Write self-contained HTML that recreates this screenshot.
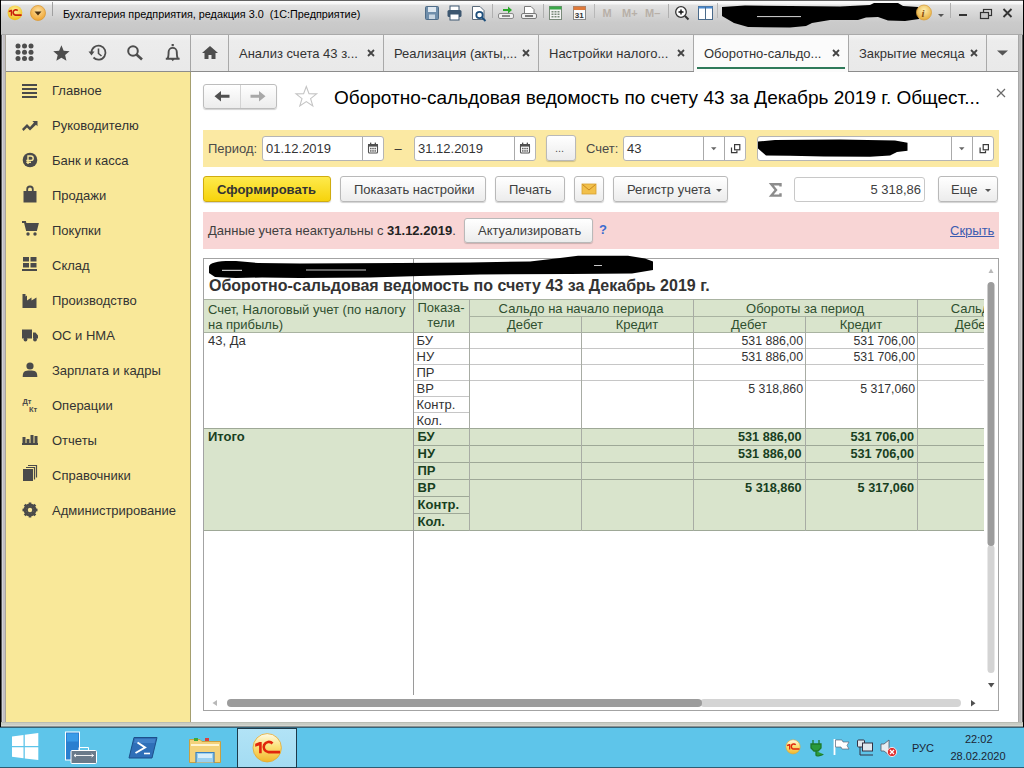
<!DOCTYPE html>
<html><head><meta charset="utf-8">
<style>
*{box-sizing:border-box;margin:0;padding:0}
html,body{width:1024px;height:768px;overflow:hidden;background:#000;font-family:"Liberation Sans",sans-serif;color:#333}
.a{position:absolute}
.t{position:absolute;white-space:nowrap;line-height:1}
svg{position:absolute;overflow:visible}
#frame{left:1px;top:0;width:1022px;height:728px;background:#c9c9c9}
#titlebar{left:1px;top:0;width:1022px;height:35px;background:linear-gradient(#5a5a5a 0,#6a6a6a 1px,#fbfbfb 1px,#f6f6f6 4px,#e2e2e2 5px,#cbcbcb 22px,#c6c6c6 34px,#aaaaaa 34px)}
#tabbar{left:6px;top:35px;width:1012px;height:37px;background:linear-gradient(#f4f4f4,#ececec 6px,#e9e9e9);border-bottom:1px solid #8c8c8c}
#sidebar{left:6px;top:72px;width:185px;height:651px;background:#f9e899;border-right:1px solid #a59f6f}
#main{left:191px;top:72px;width:827px;height:651px;background:#fff}
#taskbar{left:0;top:727px;width:1024px;height:41px;background:#5ec5ea;border-top:1px solid #35657a;border-bottom:1px solid #2c5d73}
.nav{font-size:13px;color:#333}
.tab{position:absolute;top:35px;height:36px;border-right:1px solid #a9a9a9}
.tabt{position:absolute;top:47px;font-size:13px;color:#333;white-space:nowrap;line-height:1}
.btn{position:absolute;border:1px solid #b9b9b9;border-radius:3px;background:linear-gradient(#fff,#ececec);box-shadow:0 1px 1px rgba(0,0,0,.18);font-size:13px;color:#404040;text-align:center;white-space:nowrap}
.inp{position:absolute;border:1px solid #b5b5b5;border-radius:3px;background:#fff;font-size:13px;color:#333}
.ic{fill:#4d4d4d}
</style></head><body>
<div class="a" id="frame"></div>
<div class="a" id="titlebar"></div>
<div class="a" id="tabbar"></div>
<div class="a" id="sidebar"></div>
<div class="a" id="main"></div>
<div class="a" id="taskbar"></div>
<div class="a" style="left:1px;top:35px;width:5px;height:692px;background:linear-gradient(90deg,#5a5a5a 0,#5a5a5a 1px,#d2d2d8 1px,#d2d2d8 2px,#c2bec2 2px,#c2bec2 4px,#aaa69a 4px)"></div>
<div class="a" style="left:1018px;top:35px;width:5px;height:692px;background:linear-gradient(90deg,#a8a8a8 0,#a8a8a8 1px,#bcbcbc 1px,#bcbcbc 3px,#cdcdcd 3px,#cdcdcd 4px,#5a5a5a 4px)"></div>
<div class="a" style="left:1px;top:722px;width:1022px;height:5px;background:linear-gradient(#b8bcb4 0,#b8bcb4 1px,#c8ccc4 1px,#c8ccc4 3px,#d4d6d0 3px,#d4d6d0 4px,#8a9090 4px)"></div>

<!-- ===== TITLE BAR ===== -->
<svg style="left:0;top:0" width="1024" height="35">
  <!-- 1C logo -->
  <g transform="translate(7.4 5.4) scale(0.52)">
    <circle cx="14.5" cy="14.3" r="14.2" fill="url(#g1c)"/>
    <path d="M2.5 10.2 L6.8 8.6 H9 V19.8 H6.4 V12 L2.5 13.2Z" fill="#c8200c"/>
    <path d="M19.8 10 A5.1 5.1 0 1 0 15.8 18.6 H27.3" fill="none" stroke="#c8200c" stroke-width="3.2"/>
  </g>
  <defs>
    <radialGradient id="g1c" cx="0.5" cy="0.35" r="0.6"><stop offset="0" stop-color="#fff3a0"/><stop offset="1" stop-color="#f0c020"/></radialGradient>
    <radialGradient id="gor" cx="0.5" cy="0.35" r="0.6"><stop offset="0" stop-color="#fde0a0"/><stop offset="1" stop-color="#f0a838"/></radialGradient>
    <radialGradient id="ginf" cx="0.5" cy="0.35" r="0.6"><stop offset="0" stop-color="#fff0b0"/><stop offset="1" stop-color="#e8b040"/></radialGradient>
  </defs>
  <!-- dropdown circle -->
  <circle cx="38" cy="13" r="7.5" fill="url(#gor)" stroke="#d99a3a" stroke-width="0.8"/>
  <path d="M34.5 11.5 L41.5 11.5 L38 15.5 Z" fill="#4a3010"/>
  <line x1="52.5" y1="2" x2="52.5" y2="16" stroke="#a0a0a0"/>
  <!-- toolbar icons -->
  <!-- save -->
  <rect x="425.5" y="6.5" width="13" height="13" rx="1" fill="#6f8eab" stroke="#4f6c88"/>
  <rect x="428" y="7" width="8" height="5" fill="#dfe8f0"/>
  <rect x="429" y="14.5" width="6" height="4.5" fill="#c9d6e2"/>
  <!-- print -->
  <rect x="450" y="6" width="9" height="5" fill="#fff" stroke="#3d5770"/>
  <rect x="447.5" y="10" width="14" height="7" rx="1.5" fill="#3d5770"/>
  <rect x="450" y="14" width="9" height="6" fill="#fff" stroke="#3d5770"/>
  <!-- preview -->
  <path d="M472.5 6.5 H480 L484 10.5 V19.5 H472.5 Z" fill="#fff" stroke="#5a6a7a"/>
  <circle cx="479.5" cy="15" r="3.2" fill="none" stroke="#1d4f7c" stroke-width="1.8"/>
  <line x1="482" y1="17.5" x2="485.5" y2="21" stroke="#1d4f7c" stroke-width="2"/>
  <line x1="492.5" y1="4" x2="492.5" y2="18" stroke="#b0b0b0"/>
  <!-- export -->
  <path d="M503 9 H508 V6.5 L512 10 L508 13.5 V11 H503Z" fill="#2aa82a"/>
  <rect x="498.5" y="13.5" width="15" height="5" rx="1.5" fill="#f0f0f0" stroke="#8a8a8a"/>
  <rect x="502" y="15" width="8" height="2" fill="#8a8a8a"/>
  <!-- tray -->
  <path d="M524.5 6.5 H531 L534 9.5 V14 H524.5Z" fill="#fff" stroke="#7a7a7a"/>
  <rect x="521.5" y="13.5" width="15" height="5" rx="1.5" fill="#f0f0f0" stroke="#7a7a7a"/>
  <rect x="525" y="15" width="8" height="2" fill="#7a7a7a"/>
  <line x1="543.5" y1="4" x2="543.5" y2="18" stroke="#b0b0b0"/>
  <!-- calendar green -->
  <rect x="549.5" y="6.5" width="12" height="13" fill="#f4f4f4" stroke="#7a8a7a"/>
  <rect x="549.5" y="6.5" width="12" height="3" fill="#3aa848"/>
  <g fill="#7a8a7a"><rect x="551.5" y="11" width="2" height="1.5"/><rect x="554.5" y="11" width="2" height="1.5"/><rect x="557.5" y="11" width="2" height="1.5"/><rect x="551.5" y="13.5" width="2" height="1.5"/><rect x="554.5" y="13.5" width="2" height="1.5"/><rect x="557.5" y="13.5" width="2" height="1.5"/><rect x="551.5" y="16" width="2" height="1.5"/><rect x="554.5" y="16" width="2" height="1.5"/><rect x="557.5" y="16" width="2" height="1.5"/></g>
  <!-- calendar 31 -->
  <rect x="573.5" y="6.5" width="12" height="13" fill="#fafafa" stroke="#8a8a8a"/>
  <rect x="573.5" y="6.5" width="12" height="3.5" fill="#e07a3a"/>
  <text x="574.8" y="18.3" font-family="Liberation Sans" font-weight="700" font-size="8" fill="#333">31</text>
  <line x1="594.5" y1="4" x2="594.5" y2="18" stroke="#b8b8b8"/>
  <!-- M M+ M- -->
  <text x="602.5" y="17" font-family="Liberation Sans" font-weight="700" font-size="11" fill="#b8b0a8">M</text>
  <text x="622" y="17" font-family="Liberation Sans" font-weight="700" font-size="11" fill="#b8b0a8">M+</text>
  <text x="645" y="17" font-family="Liberation Sans" font-weight="700" font-size="11" fill="#b8b0a8">M–</text>
  <line x1="668.5" y1="4" x2="668.5" y2="18" stroke="#b0b0b0"/>
  <!-- zoom -->
  <circle cx="681" cy="12" r="5.3" fill="#fff" stroke="#333" stroke-width="1.3"/>
  <path d="M678.5 12 H683.5 M681 9.5 V14.5" stroke="#111" stroke-width="1.4"/>
  <line x1="685" y1="16" x2="688.5" y2="19.5" stroke="#333" stroke-width="2"/>
  <!-- panels -->
  <rect x="698.5" y="6.5" width="14" height="13" fill="#fff" stroke="#4a6a8a"/>
  <rect x="698.5" y="6.5" width="14" height="2" fill="#4a8ad0"/>
  <line x1="705.5" y1="7" x2="705.5" y2="19" stroke="#4a6a8a"/>
  <line x1="717.5" y1="3" x2="717.5" y2="18" stroke="#b8b8b8"/>
  <!-- black scribble -->
  <path d="M722 7 L745 5.5 L790 6 L840 6.5 L870 5 L874 3 L898 3 L903 6 L918 7 L919 19 L905 21 L888 20.5 L878 17 L866 17.5 L858 20 L830 20 L812 23 L806 26 L790 27.5 L748 27 L734 23 L722 16 Z" fill="#000"/>
  <path d="M757 16.6 L801 16.6" stroke="#d8d8d8" stroke-width="1"/>
  <!-- info -->
  <circle cx="924" cy="12.5" r="7.5" fill="url(#ginf)" stroke="#d8a040" stroke-width="0.8"/>
  <text x="921.5" y="17" font-family="Liberation Serif" font-weight="700" font-style="italic" font-size="11" fill="#8a5010">i</text>
  <path d="M938 14 H944 L941 17Z" fill="#555"/>
  <line x1="950.5" y1="3" x2="950.5" y2="18" stroke="#b0b0b0"/>
  <!-- window controls -->
  <rect x="959" y="14" width="8" height="2" fill="#333"/>
  <rect x="983.5" y="9.5" width="8" height="6" fill="none" stroke="#333" stroke-width="1.2"/>
  <rect x="980.5" y="12.5" width="8" height="6" fill="#c8c8c8" stroke="#333" stroke-width="1.2"/>
  <path d="M1003.5 9 L1011.5 17 M1011.5 9 L1003.5 17" stroke="#333" stroke-width="1.8"/>
</svg>
<div class="t" style="left:63px;top:8.5px;font-size:10.8px;color:#000">Бухгалтерия предприятия, редакция 3.0&nbsp; (1С:Предприятие)</div>
<!-- ===== TAB BAR ===== -->
<svg style="left:0;top:35px" width="1024" height="37">
  <g class="ic">
    <!-- grid dots -->
    <circle cx="18" cy="11" r="2.5"/><circle cx="24.5" cy="11" r="2.5"/><circle cx="31" cy="11" r="2.5"/>
    <circle cx="18" cy="17.3" r="2.5"/><circle cx="24.5" cy="17.3" r="2.5"/><circle cx="31" cy="17.3" r="2.5"/>
    <circle cx="18" cy="23.6" r="2.5"/><circle cx="24.5" cy="23.6" r="2.5"/><circle cx="31" cy="23.6" r="2.5"/>
    <!-- star -->
    <path d="M61.40 10.20 L63.69 15.64 L69.58 16.14 L65.11 20.01 L66.45 25.76 L61.40 22.70 L56.35 25.76 L57.69 20.01 L53.22 16.14 L59.11 15.64Z"/>
  </g>
  <!-- history -->
  <path d="M91.5 17.5 A7 7 0 1 1 93.5 22.5" fill="none" stroke="#4d4d4d" stroke-width="1.8"/>
  <path d="M88.5 16.5 L94.5 16.5 L91.5 20.5Z" fill="#4d4d4d"/>
  <path d="M98.5 13.5 V18.5 L101.5 21" fill="none" stroke="#4d4d4d" stroke-width="1.6"/>
  <!-- search -->
  <circle cx="133" cy="16" r="4.8" fill="none" stroke="#4d4d4d" stroke-width="2"/>
  <line x1="136.5" y1="19.5" x2="142" y2="24.5" stroke="#4d4d4d" stroke-width="2.6"/>
  <!-- bell -->
  <path d="M165.8 23.8 H179.6 M167.5 23.5 C168.6 22 168.6 20.5 168.6 17 A4.1 4.1 0 0 1 176.8 17 C176.8 20.5 176.8 22 177.9 23.5" fill="none" stroke="#4d4d4d" stroke-width="1.9"/>
  <rect x="171.6" y="9" width="2.2" height="2.2" fill="#4d4d4d"/>
  <path d="M171 24 H174.5 L172.75 26.2Z" fill="#4d4d4d"/>
  <line x1="190.5" y1="0" x2="190.5" y2="36" stroke="#a5a5a5"/>
  <!-- home -->
  <path d="M210 11 L218 18 H215.5 V24 H211.5 V20 H208.5 V24 H204.5 V18 H202 Z" fill="#4d4d4d"/>
  <line x1="228.5" y1="0" x2="228.5" y2="36" stroke="#a9a9a9"/>
  <line x1="383.5" y1="0" x2="383.5" y2="36" stroke="#a9a9a9"/>
  <line x1="538.5" y1="0" x2="538.5" y2="36" stroke="#a9a9a9"/>
  <line x1="693.5" y1="0" x2="693.5" y2="36" stroke="#a9a9a9"/>
  <line x1="848.5" y1="0" x2="848.5" y2="36" stroke="#a9a9a9"/>
  <line x1="986.5" y1="0" x2="986.5" y2="36" stroke="#a9a9a9"/>
</svg>
<div class="a" style="left:694px;top:36px;width:154px;height:36px;background:#fbfbfb"></div>
<div class="a" style="left:697px;top:67px;width:148px;height:2px;background:#2f7a5a"></div>
<div class="tabt" style="left:239px">Анализ счета 43 з...</div>
<div class="tabt" style="left:394px">Реализация (акты,...</div>
<div class="tabt" style="left:549px">Настройки налого...</div>
<div class="tabt" style="left:704px">Оборотно-сальдо...</div>
<div class="tabt" style="left:859px">Закрытие месяца</div>
<svg style="left:0;top:35px" width="1024" height="37">
  <g stroke="#444" stroke-width="1.8">
    <path d="M368 15 L374 21 M374 15 L368 21"/>
    <path d="M523 15 L529 21 M529 15 L523 21"/>
    <path d="M678 15 L684 21 M684 15 L678 21"/>
    <path d="M833 15 L839 21 M839 15 L833 21"/>
    <path d="M971 15 L977 21 M977 15 L971 21"/>
  </g>
  <path d="M997 15.5 H1008 L1002.5 20.5Z" fill="#555"/>
</svg>

<!-- ===== SIDEBAR ===== -->
<svg style="left:0;top:72px" width="191" height="460">
  <g fill="#4a4a4a">
    <!-- Главное hamburger -->
    <rect x="22" y="12" width="15" height="2"/><rect x="22" y="16" width="15" height="2"/><rect x="22" y="20" width="15" height="2"/><rect x="22" y="24" width="15" height="2"/>
    <!-- Руководителю trend -->
    <path d="M22 57 L27 52 L30 55 L34 50.5 L32.3 49 H37.5 V54.2 L36 52.7 L30 58.5 L27 55.5 L23.5 59Z"/>
    <!-- Банк ruble coin -->
    <circle cx="30" cy="88" r="7.3"/>
    <!-- Продажи bag -->
    <path d="M23.5 119 H36.5 V130.5 H23.5Z"/>
    <!-- Покупки cart -->
    <g transform="translate(0 2)"><path d="M22 148 H25 L27 156 H36 L37.5 150 H26" fill="none" stroke="#4a4a4a" stroke-width="2.2"/>
    <path d="M25.5 149.5 H37.5 L36 156 H27Z"/>
    <circle cx="28" cy="160" r="1.7"/><circle cx="35" cy="160" r="1.7"/></g>
    <!-- Склад -->
    <rect x="23" y="185" width="6" height="4.5"/><rect x="30.5" y="185" width="6" height="4.5"/>
    <rect x="23" y="191" width="6" height="4.5"/><rect x="30.5" y="191" width="6" height="4.5"/>
    <rect x="22" y="197" width="15" height="2"/>
    <!-- Производство factory -->
    <path d="M22.5 236 V222 H25.5 V224.5 L27 223.5 V228.5 L31.5 225.5 V228.5 L36.5 225.5 V236Z"/>
    <!-- ОС truck -->
    <g transform="translate(0 1.5)"><path d="M22 256 H32 V265 H22Z M33 259 H35.5 L38 262 V265 H33Z"/>
    <circle cx="25.5" cy="266" r="1.9"/><circle cx="35" cy="266" r="1.9"/></g>
    <!-- Зарплата person -->
    <circle cx="30" cy="294" r="3.6"/>
    <path d="M22.7 305 C22.7 299 25 298.5 30 298.5 C35 298.5 37.3 299 37.3 305Z"/>
    <!-- Отчеты bars -->
    <rect x="22.5" y="365" width="3" height="7"/><rect x="26.5" y="367" width="3" height="5"/><rect x="30.5" y="363" width="3" height="9"/><rect x="34.5" y="364" width="3" height="8"/>
    <rect x="22" y="371" width="16" height="2"/>
    <!-- Справочники -->
    <rect x="23" y="397" width="10" height="12"/>
    <path d="M34.5 395 V407.5 M36.5 393 V405.5 M26 395.5 H34.5 M28 393.5 H36.5" stroke="#4a4a4a" stroke-width="1.2" fill="none"/>
  </g>
  <text x="22.5" y="332" font-family="Liberation Sans" font-weight="700" font-size="7.5" fill="#4a4a4a">Дт</text>
  <text x="29" y="339.5" font-family="Liberation Sans" font-weight="700" font-size="7.5" fill="#4a4a4a">Кт</text>
  <!-- ruble sign -->
  <path d="M28 92 V84 H31 A2.2 2.2 0 0 1 31 88.4 H26.3 M26.3 90.3 H31" fill="none" stroke="#f9e899" stroke-width="1.4"/>
  <!-- bag handle -->
  <path d="M27.2 119 V117.3 A2.8 2.8 0 0 1 32.8 117.3 V119" fill="none" stroke="#4a4a4a" stroke-width="1.8"/>
  <!-- gear -->
  <g transform="translate(30 438)">
    <circle r="5" fill="none" stroke="#4a4a4a" stroke-width="3"/>
    <g stroke="#4a4a4a" stroke-width="2.6">
      <line x1="0" y1="-7.5" x2="0" y2="7.5"/><line x1="-7.5" y1="0" x2="7.5" y2="0"/>
      <line x1="-5.3" y1="-5.3" x2="5.3" y2="5.3"/><line x1="-5.3" y1="5.3" x2="5.3" y2="-5.3"/>
    </g>
    <circle r="2.2" fill="#f9e899"/>
  </g>
</svg>
<div class="t nav" style="left:52px;top:84px">Главное</div>
<div class="t nav" style="left:52px;top:119px">Руководителю</div>
<div class="t nav" style="left:52px;top:154px">Банк и касса</div>
<div class="t nav" style="left:52px;top:189px">Продажи</div>
<div class="t nav" style="left:52px;top:224px">Покупки</div>
<div class="t nav" style="left:52px;top:259px">Склад</div>
<div class="t nav" style="left:52px;top:294px">Производство</div>
<div class="t nav" style="left:52px;top:329px">ОС и НМА</div>
<div class="t nav" style="left:52px;top:364px">Зарплата и кадры</div>
<div class="t nav" style="left:52px;top:399px">Операции</div>
<div class="t nav" style="left:52px;top:434px">Отчеты</div>
<div class="t nav" style="left:52px;top:469px">Справочники</div>
<div class="t nav" style="left:52px;top:504px">Администрирование</div>
<!-- ===== MAIN HEADER ===== -->
<div class="btn" style="left:203px;top:84px;width:74px;height:25px;border-color:#bdbdbd"></div>
<div class="a" style="left:240px;top:85px;width:1px;height:23px;background:#d4d4d4"></div>
<svg style="left:0;top:0" width="1024" height="260">
  <!-- back arrow -->
  <path d="M214.5 96.3 L221 91 V94.8 H229.5 V97.8 H221 V101.6Z" fill="#505050"/>
  <path d="M265.5 96.3 L259 91 V94.8 H250.5 V97.8 H259 V101.6Z" fill="#a8a8a8"/>
  <!-- star outline -->
  <path d="M306.3 86.5 L309 93.8 L316.6 93.9 L310.6 98.6 L312.8 105.9 L306.3 101.6 L299.8 105.9 L302 98.6 L296 93.9 L303.6 93.8 Z" fill="none" stroke="#c4c4c4" stroke-width="1.1"/>
  <!-- close x -->
  <path d="M997 89 L1005 97 M1005 89 L997 97" stroke="#6a6a6a" stroke-width="1.2"/>
</svg>
<div class="t" style="left:334px;top:88px;font-size:19px;color:#000">Оборотно-сальдовая ведомость по счету 43 за Декабрь 2019 г. Общест...</div>

<!-- ===== PERIOD BAR ===== -->
<div class="a" style="left:203px;top:130px;width:796px;height:37px;background:#fbe9a3"></div>
<div class="t" style="left:208px;top:142px;font-size:13px;color:#4a4a4a">Период:</div>
<div class="inp" style="left:262px;top:136px;width:122px;height:25px"></div>
<div class="a" style="left:362px;top:137px;width:1px;height:23px;background:#aaaaaa"></div>
<div class="t" style="left:266px;top:142px;font-size:13px;color:#333">01.12.2019</div>
<div class="t" style="left:394.5px;top:141.5px;font-size:13px;color:#333">–</div>
<div class="inp" style="left:414px;top:136px;width:122px;height:25px"></div>
<div class="a" style="left:514px;top:137px;width:1px;height:23px;background:#aaaaaa"></div>
<div class="t" style="left:418px;top:142px;font-size:13px;color:#333">31.12.2019</div>
<div class="btn" style="left:546px;top:135px;width:30px;height:26px"></div>
<div class="t" style="left:555px;top:143px;font-size:11px;color:#555">...</div>
<div class="t" style="left:586px;top:142px;font-size:13px;color:#4a4a4a">Счет:</div>
<div class="inp" style="left:623px;top:136px;width:123px;height:25px"></div>
<div class="a" style="left:703px;top:137px;width:1px;height:23px;background:#aaaaaa"></div>
<div class="a" style="left:724px;top:137px;width:1px;height:23px;background:#aaaaaa"></div>
<div class="t" style="left:627px;top:142px;font-size:13px;color:#333">43</div>
<div class="inp" style="left:757px;top:136px;width:237px;height:25px"></div>
<div class="a" style="left:951px;top:137px;width:1px;height:23px;background:#aaaaaa"></div>
<div class="a" style="left:972px;top:137px;width:1px;height:23px;background:#aaaaaa"></div>
<svg style="left:0;top:0" width="1024" height="260">
  <!-- calendar icons -->
  <g fill="#666">
    <rect x="368.5" y="144.5" width="9" height="8.5" rx="1" fill="none" stroke="#505050" stroke-width="1.1"/>
    <rect x="368" y="144" width="10" height="2.6" fill="#505050"/>
    <rect x="370" y="142.6" width="1.3" height="2" fill="#505050"/><rect x="374.7" y="142.6" width="1.3" height="2" fill="#505050"/>
    <rect x="370" y="147.8" width="1.6" height="1.5"/><rect x="372.2" y="147.8" width="1.6" height="1.5"/><rect x="374.4" y="147.8" width="1.6" height="1.5"/>
    <rect x="370" y="150.2" width="1.6" height="1.5"/><rect x="372.2" y="150.2" width="1.6" height="1.5"/><rect x="374.4" y="150.2" width="1.6" height="1.5"/>
    <rect x="520.5" y="144.5" width="9" height="8.5" rx="1" fill="none" stroke="#505050" stroke-width="1.1"/>
    <rect x="520" y="144" width="10" height="2.6" fill="#505050"/>
    <rect x="522" y="142.6" width="1.3" height="2" fill="#505050"/><rect x="526.7" y="142.6" width="1.3" height="2" fill="#505050"/>
    <rect x="522" y="147.8" width="1.6" height="1.5"/><rect x="524.2" y="147.8" width="1.6" height="1.5"/><rect x="526.4" y="147.8" width="1.6" height="1.5"/>
    <rect x="522" y="150.2" width="1.6" height="1.5"/><rect x="524.2" y="150.2" width="1.6" height="1.5"/><rect x="526.4" y="150.2" width="1.6" height="1.5"/>
    <!-- dropdown arrows -->
    <path d="M711 147.2 H716.5 L713.75 150.2Z"/>
    <path d="M959 147.2 H964.5 L961.75 150.2Z"/>
  </g>
  <!-- open icons -->
  <g fill="none" stroke="#3a3a3a" stroke-width="1.2">
    <rect x="734.6" y="144.6" width="5.2" height="5.2"/><path d="M731.5 147.4 V152.6 H736.9 V150.6"/>
    <rect x="983.2" y="144.6" width="5.2" height="5.2"/><path d="M980.1 147.4 V152.6 H985.5 V150.6"/>
  </g>
  <!-- org scribble -->
  <path d="M758 141.5 L775 140 L840 139.6 L895 140.5 L907.5 142.7 L907.5 150.8 L897 152 L890 155.5 L870 156.8 L824 156.6 L790 155.8 L766 155.4 L758 148.5 Z" fill="#000"/>
</svg>

<!-- ===== BUTTON ROW ===== -->
<div class="btn" style="left:203px;top:176px;width:128px;height:26px;background:linear-gradient(#feea4c,#f6d30c);border-color:#d0ac10"></div>
<div class="t" style="left:217px;top:183px;font-size:13px;font-weight:700;color:#333">Сформировать</div>
<div class="btn" style="left:340px;top:176px;width:146px;height:26px"></div>
<div class="t" style="left:354px;top:183px;font-size:13px;color:#404040">Показать настройки</div>
<div class="btn" style="left:495px;top:176px;width:70px;height:26px"></div>
<div class="t" style="left:509px;top:183px;font-size:13px;color:#404040">Печать</div>
<div class="btn" style="left:574px;top:176px;width:30px;height:26px"></div>
<div class="btn" style="left:613px;top:176px;width:115px;height:26px"></div>
<div class="t" style="left:627px;top:183px;font-size:13px;color:#404040">Регистр учета</div>
<div class="inp" style="left:794px;top:177px;width:131px;height:25px;border-color:#c8c8c8"></div>
<div class="t" style="left:850px;top:183px;width:71px;text-align:right;font-size:13px;color:#404040">5 318,86</div>
<div class="btn" style="left:938px;top:176px;width:60px;height:26px"></div>
<div class="t" style="left:951px;top:183px;font-size:13px;color:#404040">Еще</div>
<svg style="left:0;top:0" width="1024" height="260">
  <!-- envelope -->
  <rect x="582" y="184" width="14" height="10" fill="#f2c04a" stroke="#d8a030" stroke-width="0.8"/>
  <path d="M582.5 184.5 L589 190 L595.5 184.5" fill="none" stroke="#c88820" stroke-width="1"/>
  <path d="M716 189 H722 L719 192Z" fill="#555"/>
  <path d="M985 189 H991 L988 192Z" fill="#555"/>
  <!-- sigma -->
  <path d="M780.5 186.5 V184.2 H771.3 L776 189.9 L771.3 195.6 H780.5 V193.3" fill="none" stroke="#8c8c8c" stroke-width="2.4" stroke-linejoin="miter"/>
</svg>

<!-- ===== PINK BAR ===== -->
<div class="a" style="left:203px;top:212px;width:796px;height:37px;background:#f8d5d5"></div>
<div class="t" style="left:208px;top:224px;font-size:13px;color:#404040">Данные учета неактуальны с <b style="color:#222">31.12.2019</b>.</div>
<div class="btn" style="left:464px;top:218px;width:129px;height:25px"></div>
<div class="t" style="left:478px;top:224px;font-size:13px;color:#404040">Актуализировать</div>
<div class="t" style="left:599px;top:223px;font-size:13px;font-weight:700;color:#3b6bd0">?</div>
<div class="t" style="left:950px;top:224px;font-size:13px;color:#3b5bb0;text-decoration:underline">Скрыть</div>
<!-- ===== TABLE ===== -->
<div class="a" style="left:203px;top:258px;width:796px;height:453px;border:1px solid #a3a3a3;background:#fff"></div>
<div class="a" style="left:0;top:0;width:984px;height:768px;overflow:hidden">
<div class="a" style="left:204px;top:299px;width:780px;height:34px;background:#d9e4cc"></div>
<div class="a" style="left:204px;top:428px;width:780px;height:103px;background:#d9e4cc"></div>
<svg style="left:0;top:0" width="1024" height="768"><line x1="204" y1="299.5" x2="984" y2="299.5" stroke="#a9b3a1"/><line x1="469" y1="316.5" x2="984" y2="316.5" stroke="#a9b3a1"/><line x1="204" y1="332.5" x2="984" y2="332.5" stroke="#a9b3a1"/><line x1="413" y1="348.5" x2="469" y2="348.5" stroke="#c6c6c6"/><line x1="413" y1="364.5" x2="469" y2="364.5" stroke="#c6c6c6"/><line x1="413" y1="380.5" x2="469" y2="380.5" stroke="#c6c6c6"/><line x1="413" y1="396.5" x2="469" y2="396.5" stroke="#c6c6c6"/><line x1="413" y1="412.5" x2="469" y2="412.5" stroke="#c6c6c6"/><line x1="469" y1="348.5" x2="984" y2="348.5" stroke="#c6c6c6"/><line x1="469" y1="364.5" x2="984" y2="364.5" stroke="#c6c6c6"/><line x1="469" y1="380.5" x2="984" y2="380.5" stroke="#c6c6c6"/><line x1="204" y1="428.5" x2="984" y2="428.5" stroke="#9ea897"/><line x1="413" y1="445.5" x2="469" y2="445.5" stroke="#9ea897"/><line x1="413" y1="462.5" x2="469" y2="462.5" stroke="#9ea897"/><line x1="413" y1="479.5" x2="469" y2="479.5" stroke="#9ea897"/><line x1="413" y1="496.5" x2="469" y2="496.5" stroke="#9ea897"/><line x1="413" y1="513.5" x2="469" y2="513.5" stroke="#9ea897"/><line x1="469" y1="445.5" x2="984" y2="445.5" stroke="#9ea897"/><line x1="469" y1="462.5" x2="984" y2="462.5" stroke="#9ea897"/><line x1="469" y1="479.5" x2="984" y2="479.5" stroke="#9ea897"/><line x1="204" y1="530.5" x2="984" y2="530.5" stroke="#9ea897"/><line x1="413.5" y1="259" x2="413.5" y2="695" stroke="#9a9a9a"/><line x1="469.5" y1="299" x2="469.5" y2="531" stroke="#a8aca4"/><line x1="693.5" y1="299" x2="693.5" y2="531" stroke="#a8aca4"/><line x1="917.5" y1="299" x2="917.5" y2="531" stroke="#a8aca4"/><line x1="581.5" y1="316" x2="581.5" y2="531" stroke="#a8aca4"/><line x1="805.5" y1="316" x2="805.5" y2="531" stroke="#a8aca4"/><path d="M209 267 C209 262 220 260.5 236 261 L258 263 L300 263.5 L400 263 L470 262.5 L530 261.5 L560 258 L578 255.8 L628 255.8 L645 258.5 L653 261.5 L653 270 L632 273.5 L570 274 L480 274.5 L420 276 L370 277.5 L300 278 L262 277.5 L236 278 L215 277 L209 273 Z" fill="#000"/><path d="M222 270.3 H242 M306 270 H366 M594 265.5 H602" stroke="#c8c8c8" stroke-width="1.2"/></svg>
<div class="t" style="left:209px;top:277.76px;font-size:16px;color:#333;font-weight:700">Оборотно-сальдовая ведомость по счету 43 за Декабрь 2019 г.</div>
<div class="t" style="left:208px;top:302.60px;font-size:13px;color:#2f4f2f">Счет, Налоговый учет (по налогу</div>
<div class="t" style="left:208px;top:317.50px;font-size:13px;color:#2f4f2f">на прибыль)</div>
<div class="t" style="left:413px;top:301.00px;font-size:13px;color:#2f4f2f;width:56px;text-align:center">Показа-</div>
<div class="t" style="left:413px;top:316.00px;font-size:13px;color:#2f4f2f;width:56px;text-align:center">тели</div>
<div class="t" style="left:469px;top:301.70px;font-size:13px;color:#2f4f2f;width:224px;text-align:center">Сальдо на начало периода</div>
<div class="t" style="left:693px;top:301.70px;font-size:13px;color:#2f4f2f;width:224px;text-align:center">Обороты за период</div>
<div class="t" style="left:917px;top:301.70px;font-size:13px;color:#2f4f2f;width:224px;text-align:center">Сальдо на конец периода</div>
<div class="t" style="left:469px;top:317.80px;font-size:13px;color:#2f4f2f;width:112px;text-align:center">Дебет</div>
<div class="t" style="left:581px;top:317.80px;font-size:13px;color:#2f4f2f;width:112px;text-align:center">Кредит</div>
<div class="t" style="left:693px;top:317.80px;font-size:13px;color:#2f4f2f;width:112px;text-align:center">Дебет</div>
<div class="t" style="left:805px;top:317.80px;font-size:13px;color:#2f4f2f;width:112px;text-align:center">Кредит</div>
<div class="t" style="left:917px;top:317.80px;font-size:13px;color:#2f4f2f;width:112px;text-align:center">Дебет</div>
<div class="t" style="left:1029px;top:317.80px;font-size:13px;color:#2f4f2f;width:112px;text-align:center">Кредит</div>
<div class="t" style="left:208px;top:334.00px;font-size:13px;color:#333">43, Да</div>
<div class="t" style="left:416.5px;top:334.00px;font-size:13px;color:#333">БУ</div>
<div class="t" style="left:416.5px;top:350.00px;font-size:13px;color:#333">НУ</div>
<div class="t" style="left:416.5px;top:366.00px;font-size:13px;color:#333">ПР</div>
<div class="t" style="left:416.5px;top:382.00px;font-size:13px;color:#333">ВР</div>
<div class="t" style="left:416.5px;top:398.00px;font-size:13px;color:#333">Контр.</div>
<div class="t" style="left:416.5px;top:414.00px;font-size:13px;color:#333">Кол.</div>
<div class="t" style="left:700px;top:334.59px;font-size:12.3px;color:#333;width:103px;text-align:right">531 886,00</div>
<div class="t" style="left:812px;top:334.59px;font-size:12.3px;color:#333;width:103px;text-align:right">531 706,00</div>
<div class="t" style="left:700px;top:350.59px;font-size:12.3px;color:#333;width:103px;text-align:right">531 886,00</div>
<div class="t" style="left:812px;top:350.59px;font-size:12.3px;color:#333;width:103px;text-align:right">531 706,00</div>
<div class="t" style="left:700px;top:382.59px;font-size:12.3px;color:#333;width:103px;text-align:right">5 318,860</div>
<div class="t" style="left:812px;top:382.59px;font-size:12.3px;color:#333;width:103px;text-align:right">5 317,060</div>
<div class="t" style="left:208px;top:430.30px;font-size:13px;color:#183f1f;font-weight:700">Итого</div>
<div class="t" style="left:417.5px;top:430.30px;font-size:13px;color:#183f1f;font-weight:700">БУ</div>
<div class="t" style="left:417.5px;top:447.30px;font-size:13px;color:#183f1f;font-weight:700">НУ</div>
<div class="t" style="left:417.5px;top:464.30px;font-size:13px;color:#183f1f;font-weight:700">ПР</div>
<div class="t" style="left:417.5px;top:481.30px;font-size:13px;color:#183f1f;font-weight:700">ВР</div>
<div class="t" style="left:417.5px;top:498.30px;font-size:13px;color:#183f1f;font-weight:700">Контр.</div>
<div class="t" style="left:417.5px;top:515.30px;font-size:13px;color:#183f1f;font-weight:700">Кол.</div>
<div class="t" style="left:700px;top:431.15px;font-size:12.7px;color:#183f1f;font-weight:700;width:101.5px;text-align:right">531 886,00</div>
<div class="t" style="left:812px;top:431.15px;font-size:12.7px;color:#183f1f;font-weight:700;width:102px;text-align:right">531 706,00</div>
<div class="t" style="left:700px;top:447.85px;font-size:12.7px;color:#183f1f;font-weight:700;width:101.5px;text-align:right">531 886,00</div>
<div class="t" style="left:812px;top:447.85px;font-size:12.7px;color:#183f1f;font-weight:700;width:102px;text-align:right">531 706,00</div>
<div class="t" style="left:700px;top:481.75px;font-size:12.7px;color:#183f1f;font-weight:700;width:101.5px;text-align:right">5 318,860</div>
<div class="t" style="left:812px;top:481.75px;font-size:12.7px;color:#183f1f;font-weight:700;width:102px;text-align:right">5 317,060</div>
</div>
<svg style="left:0;top:0" width="1024" height="768"><path d="M988.5 273 L991 268.5 L993.5 273Z" fill="#b8b8b8"/><rect x="987.5" y="545" width="7" height="128" rx="3.5" fill="#d4d4d4"/><rect x="987.5" y="282" width="7" height="264" rx="3.5" fill="#9c9c9c"/><path d="M988 683 H994.5 L991.2 687.5Z" fill="#505050"/><path d="M217 700 V706 L212.5 703Z" fill="#b8b8b8"/><rect x="700" y="699" width="261" height="8" rx="4" fill="#d4d4d4"/><rect x="227" y="699" width="475" height="8" rx="4" fill="#9c9c9c"/><path d="M971 700 V706.5 L975.5 703.2Z" fill="#505050"/></svg>
<!-- ===== TASKBAR ===== -->
<div class="a" style="left:237px;top:728px;width:60px;height:40px;background:linear-gradient(#b2e3f6,#a3dcf2);border:1px solid #1d3a4a"></div>
<svg style="left:0;top:0" width="1024" height="768">
  <defs>
    <linearGradient id="g1cbig" x1="0" y1="0" x2="0" y2="1"><stop offset="0" stop-color="#fffbe8"/><stop offset="0.45" stop-color="#fbe27a"/><stop offset="1" stop-color="#f2b52a"/></linearGradient>
  </defs>
  <!-- windows logo -->
  <path d="M12 736.5 L23.5 735 V746 H12Z M24.8 734.8 L38.3 733 V746 H24.8Z M12 747.3 H23.5 V758.3 L12 756.8Z M24.8 747.3 H38.3 V760 L24.8 758.5Z" fill="#fff"/>
  <!-- server manager -->
  <rect x="65.5" y="732" width="14" height="28" fill="#2a7fd0" stroke="#fff" stroke-width="1"/>
  <rect x="67" y="733.5" width="11" height="8" fill="#3a9be8"/>
  <rect x="71" y="750.5" width="25.5" height="13" rx="1" fill="#6a7a8a" stroke="#fff" stroke-width="1"/>
  <path d="M79 750.5 V747.5 H88.5 V750.5" fill="none" stroke="#fff" stroke-width="1"/>
  <path d="M74 755.5 H93.5 M76 754 L74 755.5 L76 757 M91.5 754 L93.5 755.5 L91.5 757" fill="none" stroke="#fff" stroke-width="0.9"/>
  <!-- powershell -->
  <path d="M134 737.5 H157 L152 758 H129Z" fill="#2f6fb8" stroke="#1d4f8a" stroke-width="1"/>
  <path d="M135 739 H155.5 L154.5 743 H134Z" fill="#4a8ad0" opacity="0.7"/>
  <path d="M137.5 742.5 L145 747.5 L135.5 753" fill="none" stroke="#fff" stroke-width="2"/>
  <path d="M144 753.5 H150" stroke="#fff" stroke-width="1.6"/>
  <!-- explorer -->
  <path d="M189.5 739.5 H200 L202 741.5 H220.5 V762.5 H189.5Z" fill="#f3d27a" stroke="#c9a040" stroke-width="1"/>
  <rect x="194" y="738" width="4" height="3" fill="#3aaa3a"/>
  <rect x="205" y="738" width="4" height="3" fill="#d84040"/>
  <rect x="191" y="744" width="28" height="2" fill="#fff4d0"/>
  <path d="M196 762.5 V752.5 H214 V762.5" fill="#9ad0f0" stroke="#3a80c0" stroke-width="1.2"/>
  <rect x="198" y="754" width="14" height="4" fill="#d8eefa"/>
  <!-- 1C big -->
  <g transform="translate(252.7 733.5)">
    <circle cx="14.5" cy="14.3" r="14.2" fill="url(#g1cbig)" stroke="#e3a830" stroke-width="0.8"/>
    <path d="M2.5 10.2 L6.8 8.6 H9 V19.8 H6.4 V12 L2.5 13.2Z" fill="#e0260c"/>
    <path d="M19.8 10 A5.1 5.1 0 1 0 15.8 18.6 H27.3" fill="none" stroke="#e0260c" stroke-width="2.6"/>
  </g>
  <!-- tray -->
  <g transform="translate(785.8 739.7) scale(0.5)">
    <circle cx="14.5" cy="14.3" r="14.2" fill="url(#g1cbig)" stroke="#e3a830" stroke-width="1.2"/>
    <path d="M2.5 10.2 L6.8 8.6 H9 V19.8 H6.4 V12 L2.5 13.2Z" fill="#e0260c"/>
    <path d="M19.8 10 A5.1 5.1 0 1 0 15.8 18.6 H27.3" fill="none" stroke="#e0260c" stroke-width="3"/>
  </g>
  <path d="M813 740 V744 M819 740 V744 M811 744 H821 V748 L818 751 H814 L811 748Z M816 751 V755 C816 757 823 755 823 754" fill="#2a9a3a" stroke="#1e7a2a" stroke-width="1.3"/>
  <path d="M834.5 739 V755" stroke="#fff" stroke-width="1.8"/>
  <path d="M835.5 740 H842 L843 742 H849 L847 745.5 L849 749 H842 L841 747 H835.5Z" fill="#fff" stroke="#556" stroke-width="0.6"/>
  <rect x="857.5" y="740" width="7" height="7" rx="1" fill="#dfe8ee" stroke="#334" stroke-width="1"/>
  <rect x="862.5" y="743" width="10" height="8" fill="#dfe8ee" stroke="#334" stroke-width="1"/>
  <path d="M860 747 V755 H873" fill="none" stroke="#334" stroke-width="1"/>
  <path d="M881 744 H884 L889 740 V755 L884 751 H881Z" fill="#e8eef2" stroke="#556" stroke-width="0.8"/>
  <circle cx="892" cy="752" r="4.6" fill="#e03030" stroke="#fff" stroke-width="0.8"/>
  <path d="M890 750 L894 754 M894 750 L890 754" stroke="#fff" stroke-width="1.3"/>
</svg>
<div class="t" style="left:912px;top:743px;font-size:11px;color:#1c2433">РУС</div>
<div class="t" style="left:965px;top:734px;font-size:11px;color:#1c2433">22:02</div>
<div class="t" style="left:950.5px;top:750.5px;font-size:11px;color:#1c2433">28.02.2020</div>
</body></html>
